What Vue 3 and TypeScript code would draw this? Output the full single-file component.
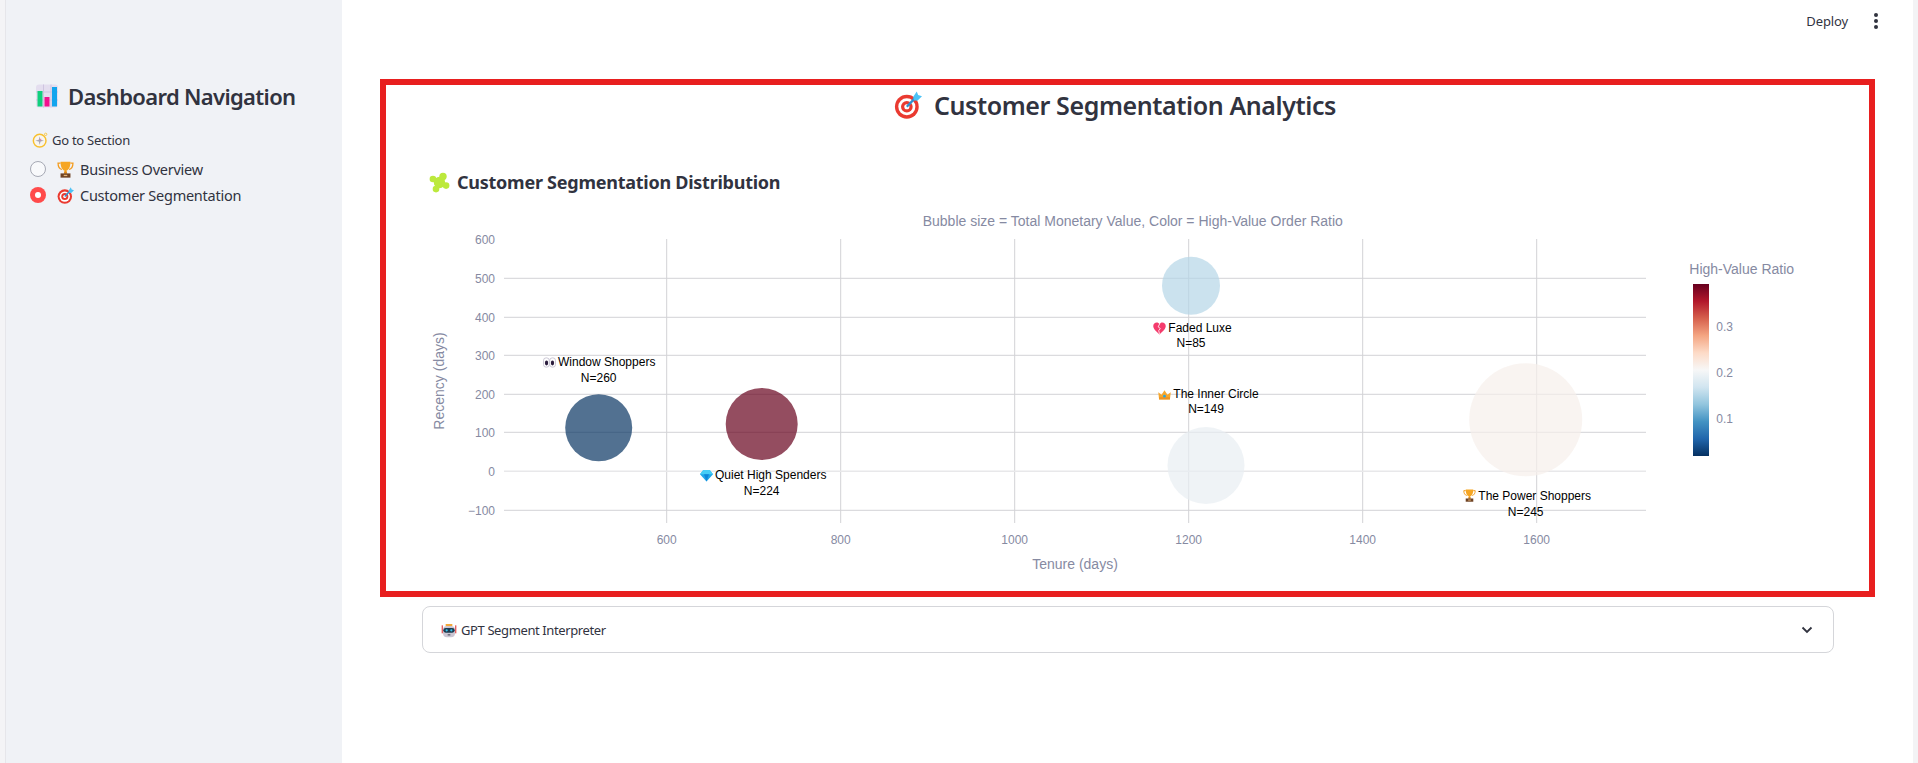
<script setup lang="ts">
interface Bubble { cx: number; cy: number; r: number; fill: string }
interface Label { icon: string; iconX: number; iconY: number; name: string; nameX: number; nameY: number; n: string; nX: number; nY: number }

const xTicks = [
  { label: '600', x: 666.7 },
  { label: '800', x: 840.7 },
  { label: '1000', x: 1014.7 },
  { label: '1200', x: 1188.7 },
  { label: '1400', x: 1362.7 },
  { label: '1600', x: 1536.7 }
]
const yTicks = [
  { label: '600', y: 239.7 },
  { label: '500', y: 278.3 },
  { label: '400', y: 317.3 },
  { label: '300', y: 355.3 },
  { label: '200', y: 394.3 },
  { label: '100', y: 432.3 },
  { label: '0', y: 471.3 },
  { label: '−100', y: 510.3 }
]
const bubbles: Bubble[] = [
  { cx: 598.7, cy: 427.7, r: 33.5, fill: 'rgb(8,52,98)' },
  { cx: 761.7, cy: 424, r: 36, fill: 'rgb(103,1,28)' },
  { cx: 1191, cy: 285.7, r: 29, fill: 'rgb(181,214,231)' },
  { cx: 1206, cy: 465.5, r: 38.5, fill: 'rgb(232,238,242)' },
  { cx: 1525.7, cy: 419.7, r: 56.5, fill: 'rgb(246,239,235)' }
]
const labels: Label[] = [
  { icon: 'eyes', iconX: 543, iconY: 356, name: 'Window Shoppers', nameX: 558, nameY: 366, n: 'N=260', nX: 598.7, nY: 382 },
  { icon: 'gem', iconX: 700, iconY: 469, name: 'Quiet High Spenders', nameX: 715, nameY: 479, n: 'N=224', nX: 761.7, nY: 495 },
  { icon: 'heart', iconX: 1153, iconY: 322, name: 'Faded Luxe', nameX: 1168.3, nameY: 332, n: 'N=85', nX: 1191, nY: 347 },
  { icon: 'crown', iconX: 1158, iconY: 388, name: 'The Inner Circle', nameX: 1173.3, nameY: 398, n: 'N=149', nX: 1206, nY: 413 },
  { icon: 'trophy', iconX: 1463, iconY: 489, name: 'The Power Shoppers', nameX: 1478.3, nameY: 500, n: 'N=245', nX: 1525.7, nY: 516 }
]
const colorTicks = [
  { label: '0.3', y: 330.5 },
  { label: '0.2', y: 376.5 },
  { label: '0.1', y: 422.5 }
]
const gradientStops = ['#67001f', '#b2182b', '#d6604d', '#f4a582', '#fddbc7', '#f7f7f7', '#d1e5f0', '#92c5de', '#4393c3', '#2166ac', '#053061']
</script>

<template>
  <svg class="defs" aria-hidden="true">
    <defs>
      <symbol id="i-chart" viewBox="0 0 24 24">
        <rect x="1" y="0.5" width="22" height="23" rx="3" fill="#e4deef" />
        <path d="M1 8h22M1 16h22M8.5 .5v23M16 .5v23" stroke="#cfc5e0" stroke-width="1" />
        <rect x="2.5" y="7" width="5" height="15.5" fill="#10cf7d" />
        <rect x="9.5" y="13" width="5" height="9.5" fill="#f2128e" />
        <rect x="17" y="3" width="5" height="19.5" fill="#12a5ee" />
      </symbol>
      <symbol id="i-compass" viewBox="0 0 24 24">
        <circle cx="11.5" cy="13" r="9.5" fill="#f8f5ef" stroke="#f8c02e" stroke-width="2.2" />
        <circle cx="20.5" cy="3.5" r="1.8" fill="none" stroke="#f8c02e" stroke-width="1.2" />
        <path d="M11.5 6.500l1.300 5.200 5.200 1.300-5.200 1.300-1.300 5.200-1.300-5.200L5 13l5.200-1.300z" fill="#a9a9b3" />
        <path d="M14.500 10l-2 3.500-1.800-1.800z" fill="#e9779b" />
      </symbol>
      <symbol id="i-trophy" viewBox="0 0 24 24">
        <path d="M5 3H1.500c0 5 1.800 8 5.500 9M19 3h3.500c0 5-1.800 8-5.500 9" fill="none" stroke="#f39c1f" stroke-width="1.800" />
        <path d="M5 1h14c0 7-2 11.500-5.500 12.500v4h-3v-4C7 12.500 5 8 5 1z" fill="#f6a623" />
        <rect x="10" y="15" width="4" height="3" fill="#e08a17" />
        <path d="M5 17.500h14v6H5z" fill="#6f4324" />
        <rect x="9.500" y="19.500" width="5" height="1.800" fill="#e8b878" />
      </symbol>
      <symbol id="i-target" viewBox="0 0 24 24">
        <circle cx="11" cy="13.500" r="10.200" fill="#ea3a30" />
        <circle cx="11" cy="13.500" r="7.300" fill="#fff" />
        <circle cx="11" cy="13.500" r="5" fill="#ea3a30" />
        <circle cx="11" cy="13.500" r="2.200" fill="#fff" />
        <path d="M11 13.500L19 5" stroke="#2f8fd0" stroke-width="2" />
        <path d="M16.500 5L19.500 .5l1.200 3 3.300 1-4 3.800-3-.3z" fill="#4cc2f5" />
      </symbol>
      <symbol id="i-puzzle" viewBox="0 0 24 24" fill="#bce93c">
        <circle cx="12" cy="12" r="6.500" />
        <circle cx="16" cy="5" r="4.200" />
        <circle cx="19.500" cy="15.500" r="3.800" />
        <circle cx="8" cy="19.500" r="3.800" />
        <circle cx="4.500" cy="8" r="3.800" />
      </symbol>
      <symbol id="i-robot" viewBox="0 0 24 24">
        <rect x="1" y="5" width="1.800" height="12" fill="#e04a4a" />
        <rect x="21.200" y="5" width="1.800" height="12" fill="#e04a4a" />
        <path d="M7 3h10v3H7z" fill="#f4a83a" />
        <rect x="3" y="6" width="18" height="17" rx="6" fill="#cbc6d3" />
        <rect x="3.500" y="9" width="17" height="7" rx="3.500" fill="#1d3c50" />
        <circle cx="8.500" cy="12.500" r="1.700" fill="#38c3ee" />
        <circle cx="15.500" cy="12.500" r="1.700" fill="#38c3ee" />
        <rect x="10" y="18.500" width="4" height="1.600" fill="#4a4a58" />
      </symbol>
      <symbol id="i-eyes" viewBox="0 0 24 24">
        <rect x="1" y="3.500" width="10.500" height="17" rx="4.500" fill="#fff" stroke="#b7b2c4" stroke-width="1.300" />
        <rect x="12.500" y="3.500" width="10.500" height="17" rx="4.500" fill="#fff" stroke="#b7b2c4" stroke-width="1.300" />
        <ellipse cx="6.500" cy="13" rx="3" ry="4.500" fill="#2b1d3d" />
        <ellipse cx="17.500" cy="13" rx="3" ry="4.500" fill="#2b1d3d" />
      </symbol>
      <symbol id="i-gem" viewBox="0 0 24 24">
        <path d="M6 2h12l6 7.500L12 23 0 9.500z" fill="#1fa8ea" />
        <path d="M6 2h12l6 7.500H0z" fill="#45cdf6" />
        <path d="M7.500 9.500h9L12 23z" fill="#0f86d8" />
      </symbol>
      <symbol id="i-heart" viewBox="0 0 24 24">
        <path d="M12 23C4 16 .500 12 .500 7.500 .500 3.500 3.500 1 6.800 1 9 1 11 2.200 12 4c1-1.800 3-3 5.200-3 3.300 0 6.300 2.500 6.300 6.500C23.500 12 20 16 12 23z" fill="#f43b6c" />
        <path d="M12.500 3l-3 6 4 3-3 4 1.500 6" fill="none" stroke="#fff" stroke-width="1.500" />
      </symbol>
      <symbol id="i-crown" viewBox="0 0 24 24">
        <path d="M2 21L.500 8l6 4.500L12 4l5.500 8.500 6-4.500L22 21z" fill="#f7a72c" />
        <rect x="2" y="17" width="20" height="4" fill="#ee9320" />
        <circle cx="12" cy="15" r="2.500" fill="#2aa4e0" />
      </symbol>
    </defs>
  </svg>

  <div class="shell">
    <aside class="sidebar">
      <div class="side-title">
        <svg class="ico-lg"><use href="#i-chart" /></svg>
        <h2>Dashboard Navigation</h2>
      </div>
      <div class="section-label">
        <svg class="ico-sm"><use href="#i-compass" /></svg>
        <span>Go to Section</span>
      </div>
      <div class="radio-row">
        <span class="radio"></span>
        <svg class="ico-md"><use href="#i-trophy" /></svg>
        <span>Business Overview</span>
      </div>
      <div class="radio-row">
        <span class="radio checked"></span>
        <svg class="ico-md"><use href="#i-target" /></svg>
        <span>Customer Segmentation</span>
      </div>
    </aside>

    <main class="main">
      <header class="topbar">
        <span class="deploy">Deploy</span>
        <span class="kebab"><i></i><i></i><i></i></span>
      </header>

      <section class="annotated">
        <h1 class="page-title">
          <svg class="ico-title"><use href="#i-target" /></svg>
          <span>Customer Segmentation Analytics</span>
        </h1>
        <h3 class="chart-heading">
          <svg class="ico-puzzle"><use href="#i-puzzle" /></svg>
          <span>Customer Segmentation Distribution</span>
        </h3>
        <svg class="chart" viewBox="386 200 1483 391" width="1483" height="391">
          <defs>
            <linearGradient id="rdbu" x1="0" y1="0" x2="0" y2="1">
              <stop v-for="(c, i) in gradientStops" :key="c" :offset="i / 10" :stop-color="c" />
            </linearGradient>
          </defs>
          <text class="chart-sub" x="922.7" y="226">Bubble size = Total Monetary Value, Color = High-Value Order Ratio</text>

          <line v-for="t in xTicks" :key="'gx' + t.label" :x1="t.x" :x2="t.x" y1="239" y2="523" class="grid" />
          <line v-for="t in yTicks.slice(1)" :key="'gy' + t.label" x1="504" x2="1646" :y1="t.y" :y2="t.y" :class="t.label === '0' ? 'zero' : 'grid'" />

          <text v-for="t in xTicks" :key="'tx' + t.label" class="tick" :x="t.x" y="544" text-anchor="middle">{{ t.label }}</text>
          <text v-for="t in yTicks" :key="'ty' + t.label" class="tick" x="495" :y="t.y + 4.5" text-anchor="end">{{ t.label }}</text>

          <text class="axis" x="1075" y="569" text-anchor="middle">Tenure (days)</text>
          <text class="axis" transform="translate(444 381) rotate(-90)" text-anchor="middle">Recency (days)</text>

          <circle v-for="b in bubbles" :key="b.cx" :cx="b.cx" :cy="b.cy" :r="b.r" :fill="b.fill" opacity="0.7" />

          <g v-for="l in labels" :key="l.name">
            <use :href="'#i-' + l.icon" :x="l.iconX" :y="l.iconY" width="13" height="13" />
            <text class="label" :x="l.nameX" :y="l.nameY">{{ l.name }}</text>
            <text class="label" :x="l.nX" :y="l.nY" text-anchor="middle">{{ l.n }}</text>
          </g>

          <text class="axis" x="1689.300" y="273.500">High-Value Ratio</text>
          <rect x="1693" y="284" width="16" height="172" fill="url(#rdbu)" />
          <text v-for="t in colorTicks" :key="t.label" class="tick" x="1716.300" :y="t.y">{{ t.label }}</text>
        </svg>
      </section>

      <div class="expander">
        <svg class="ico-robot"><use href="#i-robot" /></svg>
        <span class="exp-text">GPT Segment Interpreter</span>
        <svg class="chev" viewBox="0 0 12 8" width="12" height="8"><path d="M1.500 1.500L6 6l4.500-4.500" fill="none" stroke="#31333f" stroke-width="1.800" /></svg>
      </div>
    </main>
    <div class="edge"></div>
  </div>
</template>

<style>
html, body { margin: 0; background: #fff; overflow: hidden; }
</style>

<style scoped>
.defs { position: absolute; width: 0; height: 0; }
.shell {
  display: flex;
  height: 763px;
  overflow: hidden;
  font-family: "Noto Sans", "Open Sans", sans-serif;
  color: #31333f;
  border-left: 5px solid #f4f4f6;
  box-sizing: border-box;
}
.sidebar {
  width: 337px;
  flex: none;
  background: #f0f2f6;
  border-left: 1px solid #e6e6ea;
  box-sizing: border-box;
  padding: 84px 0 0 24px;
}
.side-title { display: flex; align-items: center; gap: 9px; height: 24px; padding-left: 5px; }
.side-title h2 { margin: 0; font-size: 22px; font-weight: 600; letter-spacing: -0.03em; line-height: 24px; white-space: nowrap; }
.ico-lg { width: 24px; height: 24px; flex: none; }
.ico-sm { width: 16px; height: 16px; flex: none; }
.ico-md { width: 17px; height: 17px; flex: none; }
.section-label { display: flex; align-items: center; gap: 4px; margin-top: 23px; padding-left: 2px; height: 18px; font-size: 13px; letter-spacing: -0.02em; }
.radio-row { display: flex; align-items: center; height: 26px; font-size: 14.500px; letter-spacing: -0.25px; white-space: nowrap; }
.section-label + .radio-row { margin-top: 7px; }
.radio { width: 16px; height: 16px; flex: none; box-sizing: border-box; border: 1.500px solid #a6a9b4; border-radius: 50%; background: #f8f9fb; margin-right: 11px; }
.radio.checked { background: #ff4b4b; border: 0; position: relative; }
.radio.checked::after { content: ""; position: absolute; left: 4.800px; top: 4.800px; width: 6.400px; height: 6.400px; border-radius: 50%; background: #fff; }
.radio-row .ico-md { margin-right: 6px; }
.main { flex: 1; min-width: 0; display: flex; flex-direction: column; }
.topbar { height: 79px; flex: none; box-sizing: border-box; display: flex; justify-content: flex-end; align-items: flex-start; padding: 12px 35px 0 0; font-size: 13px; }
.deploy { line-height: 18px; font-weight: 400; letter-spacing: -0.01em; margin-right: 26px; }
.kebab { display: flex; flex-direction: column; gap: 2px; padding-top: 1px; }
.kebab i { display: block; width: 4px; height: 4px; border-radius: 50%; background: #31333f; }
.annotated {
  margin-left: 38px;
  width: 1495px;
  height: 518px;
  flex: none;
  box-sizing: border-box;
  border: 6px solid #e81f1f;
}
.page-title { display: flex; align-items: center; justify-content: center; gap: 12px; margin: 2px 0 0; height: 36px; padding-right: 25px; font-size: 25px; font-weight: 600; letter-spacing: -0.016em; }
.ico-title { width: 28px; height: 28px; flex: none; }
.chart-heading { display: flex; align-items: center; gap: 7px; margin: 41px 0 0; padding-left: 43px; height: 36px; font-size: 18px; font-weight: 700; letter-spacing: -0.014em; box-sizing: border-box; }
.ico-puzzle { width: 21px; height: 21px; flex: none; }
.chart { display: block; }
.chart text { font-family: "Liberation Sans", Arial, sans-serif; }
.grid { stroke: #d2d2d6; stroke-width: 1; }
.zero { stroke: #e8e8ea; stroke-width: 1.500; }
.tick { font-size: 12px; fill: #868aa2; }
.axis, .chart-sub { font-size: 14px; fill: #868aa2; }
.label { font-size: 12px; fill: #000; }
.expander { margin: 9px 0 0 80px; width: 1412px; height: 47px; flex: none; box-sizing: border-box; border: 1px solid #d5d6da; border-radius: 8px; display: flex; align-items: center; padding: 0 20px 0 18px; font-size: 13px; }
.ico-robot { width: 16px; height: 16px; flex: none; margin-right: 4px; }
.exp-text { flex: 1; letter-spacing: -0.03em; }
.edge { width: 5px; flex: none; background: #f3f3f5; }
</style>
